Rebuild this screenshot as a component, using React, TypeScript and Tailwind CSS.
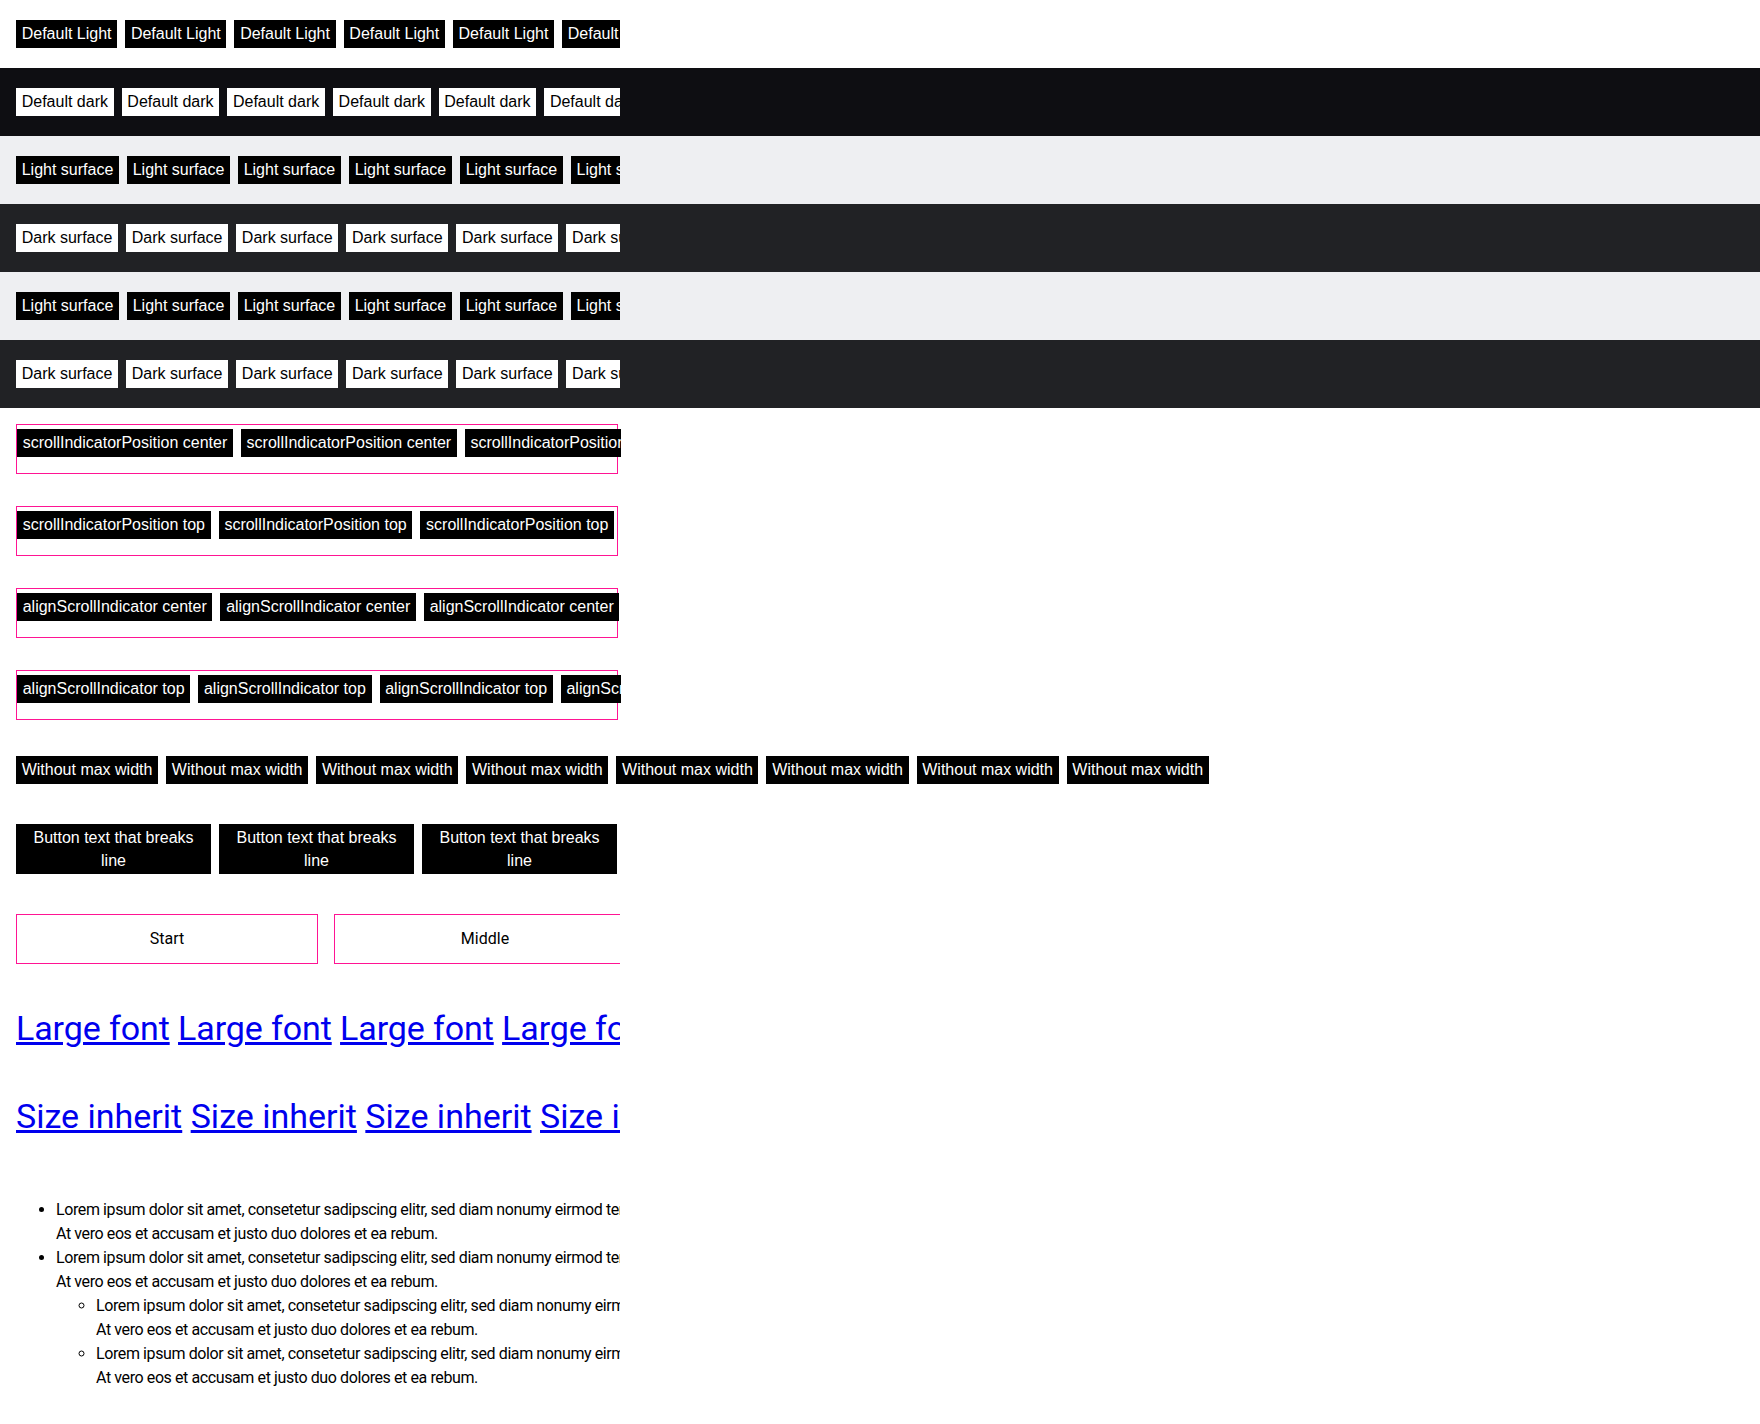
import React from "react";

const arial = "font-['Liberation_Sans',Arial,sans-serif]";
const next = "font-['Roboto',Arial,sans-serif]";

function Btn({ children, dark }: { children: React.ReactNode; dark?: boolean }) {
  return (
    <span
      className={`${arial} shrink-0 block h-[28px] px-[5.7px] py-[2px] text-[16px] leading-[24px] whitespace-nowrap ${
        dark ? "bg-white text-black" : "bg-black text-white"
      }`}
    >
      {children}
    </span>
  );
}

function Row({ label, bg, dark, n = 8 }: { label: string; bg: string; dark?: boolean; n?: number }) {
  return (
    <div className={`${bg} h-[68px] py-[20px] pl-[16px]`}>
      <div className="w-[604px] overflow-hidden flex gap-[8px]">
        {Array.from({ length: n }).map((_, i) => (
          <Btn key={i} dark={dark}>
            {label}
          </Btn>
        ))}
      </div>
    </div>
  );
}

function PinkBox({ label, n = 5 }: { label: string; n?: number }) {
  return (
    <div className="w-[602px] h-[50px] border border-[#ff1493] pt-[4px]">
      <div className="w-[604px] overflow-hidden flex gap-[8px]">
        {Array.from({ length: n }).map((_, i) => (
          <Btn key={i}>{label}</Btn>
        ))}
      </div>
    </div>
  );
}

const lorem1 =
  "Lorem ipsum dolor sit amet, consetetur sadipscing elitr, sed diam nonumy eirmod tempor invidunt ut labore et dolore magna aliquyam erat, sed diam voluptua.";
const lorem2 = "At vero eos et accusam et justo duo dolores et ea rebum.";

function Li() {
  return (
    <li>
      {lorem1}
      <br />
      {lorem2}
    </li>
  );
}

export default function App() {
  return (
    <div className="bg-white min-h-[1424px] w-[1760px] text-black">
      <Row label="Default Light" bg="bg-white" />
      <Row label="Default dark" bg="bg-[#0e0e12]" dark />
      <Row label="Light surface" bg="bg-[#eeeff2]" />
      <Row label="Dark surface" bg="bg-[#212225]" dark />
      <Row label="Light surface" bg="bg-[#eeeff2]" />
      <Row label="Dark surface" bg="bg-[#212225]" dark />

      <div className="pl-[16px] pt-[16px] flex flex-col gap-[32px]">
        <PinkBox label="scrollIndicatorPosition center" n={4} />
        <PinkBox label="scrollIndicatorPosition top" n={4} />
        <PinkBox label="alignScrollIndicator center" n={4} />
        <PinkBox label="alignScrollIndicator top" n={5} />
      </div>

      <div className="pl-[16px] pt-[36px]">
        <div className="flex gap-[8px]">
          {Array.from({ length: 8 }).map((_, i) => (
            <Btn key={i}>Without max width</Btn>
          ))}
        </div>
      </div>

      <div className="pl-[16px] pt-[40px]">
        <div className="flex gap-[8px]">
          {Array.from({ length: 3 }).map((_, i) => (
            <span
              key={i}
              className={`${arial} block w-[195px] h-[50px] px-[6px] py-[2px] bg-black text-white text-[16px] leading-[23px] text-center`}
            >
              Button text that breaks line
            </span>
          ))}
        </div>
      </div>

      <div className="pl-[16px] pt-[40px]">
        <div className="w-[604px] overflow-hidden flex gap-[16px]">
          {["Start", "Middle", "End"].map((t) => (
            <div
              key={t}
              className={`${next} shrink-0 w-[302px] h-[50px] border border-[#ff1493] flex items-center justify-center text-[16px] text-black`}
            >
              {t}
            </div>
          ))}
        </div>
      </div>

      <div className="pl-[16px] pt-[38px]">
        <div className={`${next} w-[604px] overflow-hidden whitespace-nowrap text-[34px] leading-[52px] tracking-[-0.1px]`}>
          {Array.from({ length: 5 }).map((_, i) => (
            <React.Fragment key={i}>
              <a href="#" className="text-[#0000ee] underline">
                Large font
              </a>{" "}
            </React.Fragment>
          ))}
        </div>
      </div>

      <div className="pl-[16px] pt-[36px]">
        <div className={`${next} w-[604px] overflow-hidden whitespace-nowrap text-[34px] leading-[52px]`}>
          {Array.from({ length: 5 }).map((_, i) => (
            <React.Fragment key={i}>
              <a href="#" className="text-[#0000ee] underline">
                Size inherit
              </a>{" "}
            </React.Fragment>
          ))}
        </div>
      </div>

      <div className="pl-[16px] pt-[56px]">
        <div className={`${next} w-[604px] overflow-hidden whitespace-nowrap text-[16px] leading-[24px] tracking-[-0.4px]`}>
          <ul className="list-disc pl-[40px]">
            <Li />
            <li>
              {lorem1}
              <br />
              {lorem2}
              <ul className="list-[circle] pl-[40px]">
                <Li />
                <Li />
              </ul>
            </li>
          </ul>
        </div>
      </div>
    </div>
  );
}
